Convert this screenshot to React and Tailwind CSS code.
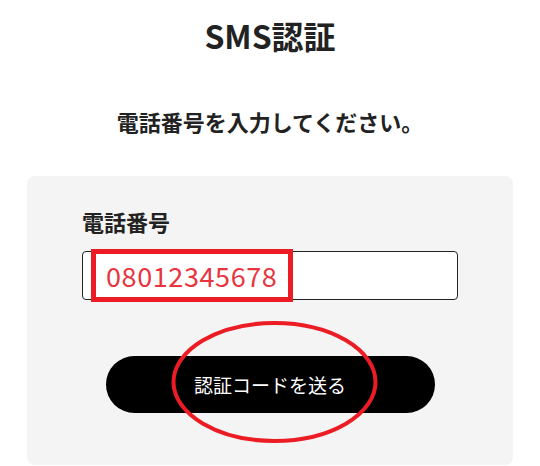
export default function App() {
  return (
    <div className="min-h-[466px] w-[540px] bg-white font-['Noto_Sans_CJK_JP','Noto_Sans',sans-serif] text-[#222]">
      <h1 className="pt-[14px] text-center text-[32px] font-bold leading-[42px]">SMS認証</h1>
      <p className="mt-[50px] text-center text-[22px] font-semibold leading-[30px]">電話番号を入力してください。</p>

      <section className="relative mx-[27px] mt-[40px] rounded-lg bg-[#f4f4f4] px-[55px] pt-[30px] pb-[52px]">
        <label className="block text-[22px] font-bold leading-[30px]">電話番号</label>
        <div className="mt-[15px] flex h-[49px] items-center rounded-[4px] border border-[#222] bg-white pl-[23px] text-[27px] leading-none tracking-[0.6px] text-[#e8353f]">
          08012345678
        </div>
        <div className="mt-[56px] flex justify-center">
          <button
            type="button"
            className="h-[57px] w-[329px] rounded-full bg-black text-[19px] leading-none text-white"
          >
            認証コードを送る
          </button>
        </div>

        {/* annotation overlays */}
        <div className="pointer-events-none absolute left-[64px] top-[73px] h-[53px] w-[202px] border-[5px] border-[#ec1c24]" />
        <svg
          className="pointer-events-none absolute left-[143px] top-[144px]"
          width="210"
          height="124"
          viewBox="0 0 210 124"
        >
          <ellipse cx="104.5" cy="62" rx="101" ry="59" fill="none" stroke="#ec1c24" strokeWidth="4" />
        </svg>
      </section>
    </div>
  );
}
